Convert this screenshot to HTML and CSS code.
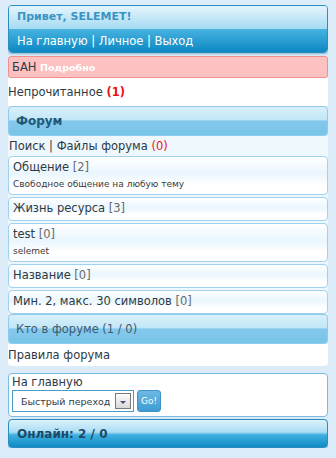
FILE: index.html
```html
<!DOCTYPE html>
<html lang="ru">
<head>
    <meta charset="UTF-8">
    <meta name="viewport" content="width=device-width, initial-scale=1.0">
    <title>Форум</title>
    <link rel="stylesheet" href="styles.css">
</head>
<body>
    <div class="head">
        <div class="head-title">Привет, SELEMET!</div>
        <div class="head-nav">
            <a href="#">На главную</a> | <a href="#">Личное</a> | <a href="#">Выход</a>
        </div>
    </div>

    <div class="ban">БАН <a href="#">Подробно</a></div>

    <div class="block unread">
        <a href="#">Непрочитанное</a> <span class="count">(1)</span>
    </div>

    <div class="cat"><b>Форум</b></div>

    <div class="forum">
        <div class="links">
            <a href="#">Поиск</a> | <a href="#">Файлы форума</a> <span class="zero">(0)</span>
        </div>
        <div class="item">
            <a href="#">Общение</a> <span class="num">[2]</span>
            <div class="desc">Свободное общение на любую тему</div>
        </div>
        <div class="item">
            <a href="#">Жизнь ресурса</a> <span class="num">[3]</span>
        </div>
        <div class="item">
            <a href="#">test</a> <span class="num">[0]</span>
            <div class="desc">selemet</div>
        </div>
        <div class="item">
            <a href="#">Название</a> <span class="num">[0]</span>
        </div>
        <div class="item">
            <a href="#">Мин. 2, макс. 30 символов</a> <span class="num">[0]</span>
        </div>
    </div>

    <div class="cat who">Кто в форуме (1 / 0)</div>
    <div class="block rules"><a href="#">Правила форума</a></div>

    <div class="jump">
        <a href="#">На главную</a>
        <div class="jump-row">
            <div class="select">
                <span>Быстрый переход</span>
                <span class="arrow"></span>
            </div>
            <button class="go" type="button">Go!</button>
        </div>
    </div>

    <div class="foot">Онлайн: 2 / 0</div>
</body>
</html>
```

FILE: styles.css
```css
body {
    margin: 5px 8px;
    background: #dcedf9;
    font-family: "DejaVu Sans", Verdana, sans-serif;
    font-size: 11.5px;
    color: #2d3a44;
}
a {
    color: #2d3a44;
    text-decoration: none;
}
.head {
    border: 1px solid #2a8cbf;
    border-radius: 4px;
    box-shadow: 0 1px 2px rgba(20, 90, 140, 0.4);
    overflow: hidden;
}
.head-title {
    height: 23px;
    line-height: 22px;
    padding-left: 8px;
    font-weight: bold;
    font-size: 11px;
    color: #3b93c4;
    background: linear-gradient(#e4f5fc, #a6daf2);
}
.head-nav {
    height: 23px;
    line-height: 24px;
    padding-left: 8px;
    color: #ffffff;
    background: linear-gradient(#47b3e0, #0c88c3);
}
.head-nav a {
    color: #ffffff;
}
.ban {
    margin-top: 3px;
    height: 20px;
    line-height: 20px;
    padding-left: 3px;
    background: #fdc1c1;
    border: 1px solid #ef8f8f;
    border-radius: 3px;
}
.ban a {
    color: #ffffff;
    font-size: 9.5px;
    font-weight: bold;
}
.block {
    background: #ffffff;
}
.unread {
    height: 28px;
    line-height: 28px;
}
.count {
    color: #ee1111;
    font-weight: bold;
}
.cat {
    height: 28px;
    line-height: 28px;
    padding-left: 7px;
    border: 1px solid #8ccbeb;
    border-radius: 4px;
    background: linear-gradient(#d9f0fa, #c2e6f7 45%, #84c9ec 50%, #78c3e9);
    color: #1e5878;
}
.cat b {
    font-size: 12px;
}
.forum {
    background: #eef7fc;
}
.links {
    height: 20px;
    line-height: 20px;
    padding-left: 1px;
}
.links .zero {
    color: #ee1111;
}
.item {
    margin-bottom: 2px;
    padding: 2px 4px 3px;
    border: 1px solid #9ed2ee;
    border-radius: 4px;
    background: linear-gradient(#ffffff, #e9f6fd 45%, #ffffff 75%);
    line-height: 17px;
}
.item:last-child {
    margin-bottom: 0;
}
.num {
    color: #6a6a6a;
}
.desc {
    margin-top: 1px;
    font-size: 9px;
    line-height: 14px;
    color: #3b3b3b;
}
.who {
    color: #3c5a70;
}
.rules {
    height: 22px;
    line-height: 22px;
    border-radius: 0 0 4px 4px;
}
.jump {
    margin-top: 7px;
    padding: 1px 3px 4px;
    background: #ffffff;
    border: 1px solid #79bcdf;
    border-radius: 4px;
}
.jump-row {
    display: flex;
    gap: 3px;
    margin-top: 1px;
}
.select {
    display: flex;
    align-items: center;
    justify-content: space-between;
    width: 110px;
    height: 20px;
    padding: 0 2px 0 8px;
    border: 1px solid #4a9cc8;
    font-size: 9.5px;
    color: #2d3a44;
}
.arrow {
    width: 14px;
    height: 14px;
    border: 1px solid #7a7a7a;
    background: linear-gradient(#fdfdfd, #d8d8d8);
    position: relative;
}
.arrow::after {
    content: "";
    position: absolute;
    left: 4px;
    top: 7px;
    border-left: 3px solid transparent;
    border-right: 3px solid transparent;
    border-top: 3px solid #4a4f7a;
}
.go {
    height: 22px;
    width: 24px;
    padding: 0;
    border: 1px solid #3e93c6;
    border-radius: 3px;
    background: linear-gradient(#6cb9e3, #3c9dd3);
    color: #ffffff;
    font-family: "DejaVu Sans", sans-serif;
    font-size: 9px;
}
.foot {
    margin-top: 2px;
    height: 27px;
    line-height: 28px;
    padding-left: 8px;
    border: 1px solid #2a8cbf;
    border-radius: 4px;
    box-shadow: 0 1px 2px rgba(20, 90, 140, 0.4);
    background: linear-gradient(#dcf2fc, #a9dcf3 45%, #3fb0df 55%, #0f8bc5);
    font-weight: bold;
    font-size: 12px;
    color: #1c4a66;
}
```
